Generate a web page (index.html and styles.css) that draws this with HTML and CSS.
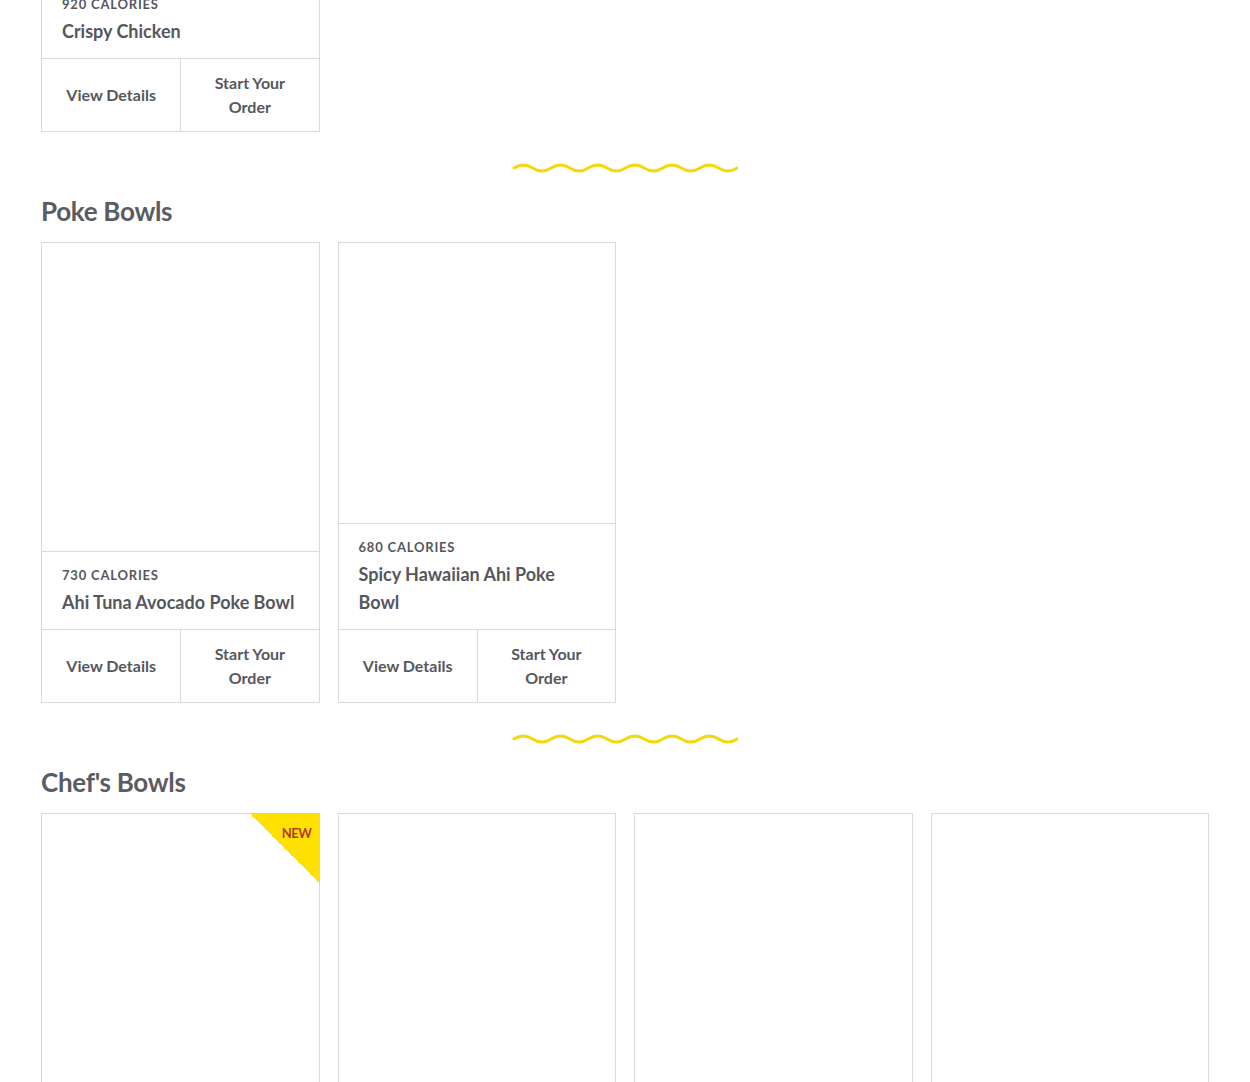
FILE: index.html
```html
<!DOCTYPE html>
<html lang="en">
<head>
    <meta charset="UTF-8">
    <meta name="viewport" content="width=device-width, initial-scale=1.0">
    <title>Menu</title>
    <link rel="stylesheet" href="styles.css">
</head>
<body>

<main class="menu">

    <!-- end of previous section -->
    <section class="category category-cut">
        <div class="grid">
            <div class="card">
                <div class="card-info">
                    <div class="calories">920 Calories</div>
                    <div class="title">Crispy Chicken</div>
                </div>
                <div class="card-actions">
                    <a class="action" href="#">View Details</a>
                    <a class="action" href="#">Start Your Order</a>
                </div>
            </div>
        </div>
    </section>

    <div class="wave">
        <svg width="226" height="14" viewBox="0 0 226 14">
            <path d="M2 7 q9.3 -6 18.6 0 t18.6 0 t18.6 0 t18.6 0 t18.6 0 t18.6 0 t18.6 0 t18.6 0 t18.6 0 t18.6 0 t18.6 0 t18.6 0" fill="none" stroke="#f5d80c" stroke-width="3" stroke-linecap="round"/>
        </svg>
    </div>

    <section class="category">
        <h2>Poke Bowls</h2>
        <div class="grid">
            <div class="card">
                <div class="card-img"></div>
                <div class="card-info">
                    <div class="calories">730 Calories</div>
                    <div class="title">Ahi Tuna Avocado Poke Bowl</div>
                </div>
                <div class="card-actions">
                    <a class="action" href="#">View Details</a>
                    <a class="action" href="#">Start Your Order</a>
                </div>
            </div>
            <div class="card">
                <div class="card-img"></div>
                <div class="card-info">
                    <div class="calories">680 Calories</div>
                    <div class="title">Spicy Hawaiian Ahi Poke Bowl</div>
                </div>
                <div class="card-actions">
                    <a class="action" href="#">View Details</a>
                    <a class="action" href="#">Start Your Order</a>
                </div>
            </div>
        </div>
    </section>

    <div class="wave">
        <svg width="226" height="14" viewBox="0 0 226 14">
            <path d="M2 7 q9.3 -6 18.6 0 t18.6 0 t18.6 0 t18.6 0 t18.6 0 t18.6 0 t18.6 0 t18.6 0 t18.6 0 t18.6 0 t18.6 0 t18.6 0" fill="none" stroke="#f5d80c" stroke-width="3" stroke-linecap="round"/>
        </svg>
    </div>

    <section class="category">
        <h2>Chef's Bowls</h2>
        <div class="grid">
            <div class="card card-tall">
                <span class="badge"><span>NEW</span></span>
                <div class="card-img"></div>
            </div>
            <div class="card card-tall"><div class="card-img"></div></div>
            <div class="card card-tall"><div class="card-img"></div></div>
            <div class="card card-tall"><div class="card-img"></div></div>
        </div>
    </section>

</main>

</body>
</html>
```

FILE: styles.css
```css
body {
    margin: 0;
    font-family: 'Lato', 'Liberation Sans', sans-serif;
    color: #55575d;
    background: #fff;
}

.menu {
    padding: 0 41px;
    margin-top: -20px;
}

.grid {
    display: grid;
    grid-template-columns: repeat(4, 1fr);
    gap: 18px;
}

.card {
    position: relative;
    display: flex;
    flex-direction: column;
    border: 1px solid #dadada;
    background: #fff;
}

.card-img {
    flex: 1;
    min-height: 280px;
    border-bottom: 1px solid #dadada;
}

.card-tall {
    height: 300px;
}

.card-tall .card-img {
    border-bottom: none;
}

.card-info {
    padding: 14px 16px 13px 20px;
}

.calories {
    font-size: 13px;
    font-weight: 700;
    letter-spacing: 0.8px;
    text-transform: uppercase;
    line-height: 18px;
}

.title {
    margin-top: 4px;
    font-size: 18px;
    font-weight: 700;
    line-height: 28px;
}

.card-actions {
    display: grid;
    grid-template-columns: 1fr 1fr;
    border-top: 1px solid #dadada;
    height: 72px;
}

.action {
    display: flex;
    align-items: center;
    justify-content: center;
    text-align: center;
    padding: 0 22px;
    font-size: 16px;
    font-weight: 700;
    line-height: 24px;
    color: #55575d;
    text-decoration: none;
}

.action + .action {
    border-left: 1px solid #dadada;
}

/* separador ondulado */
.wave {
    display: flex;
    justify-content: center;
    padding: 29px 0 0;
    height: 14px;
}

.category h2 {
    margin: 0;
    padding: 19px 0 14px;
    font-size: 26px;
    font-weight: 700;
    letter-spacing: -0.3px;
    line-height: 34px;
    color: #5a5c62;
}

.badge {
    position: absolute;
    top: -1px;
    right: -1px;
    width: 71px;
    height: 71px;
    background: linear-gradient(to bottom left, #ffe100 50%, transparent 50%);
}

.badge span {
    position: absolute;
    top: 12px;
    right: 8px;
    font-size: 13px;
    font-weight: 700;
    color: #b53a25;
    letter-spacing: -0.5px;
}
```
